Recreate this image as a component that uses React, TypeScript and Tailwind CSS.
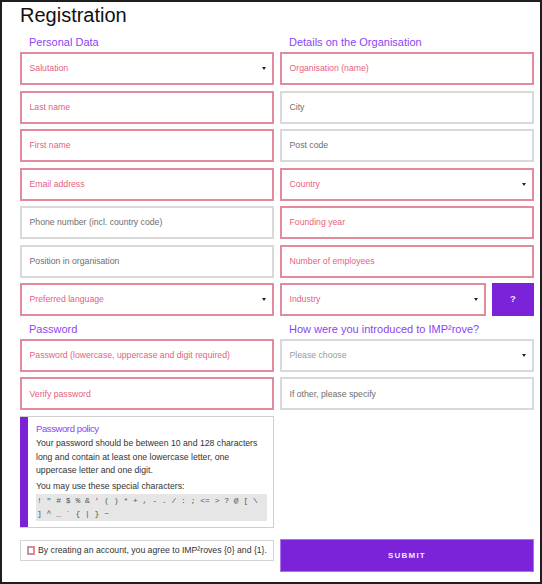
import React from "react";

const FONT = { fontFamily: '"Liberation Sans", Arial, sans-serif' };

function Arrow() {
  return (
    <span className="block w-0 h-0 border-l-[2px] border-r-[2px] border-t-[3px] border-l-transparent border-r-transparent border-t-[#222] mr-[1px]" />
  );
}

function Field({
  label,
  pink,
  select,
  light,
}: {
  label: string;
  pink?: boolean;
  select?: boolean;
  light?: boolean;
}) {
  return (
    <div
      className={`h-[33px] flex items-center justify-between pl-[7.5px] pr-[5px] border-2 bg-white text-[8.7px] leading-none ${
        pink
          ? "border-[#e48a9d] text-[#e65f7d]"
          : light
          ? "border-[#d9d9d9] text-[#9a9a9a]"
          : "border-[#d9d9d9] text-[#6e6e6e]"
      }`}
    >
      <span>{label}</span>
      {select ? <Arrow /> : null}
    </div>
  );
}

function Heading({ children }: { children: React.ReactNode }) {
  return (
    <div className="pl-[9px] text-[11px] leading-[13px] text-[#8a45f4] mb-[3.5px]">
      {children}
    </div>
  );
}

export default function App() {
  return (
    <div
      className="w-[542px] h-[584px] border-2 border-[#1e1e1e] bg-white pl-[18px] pr-[6px] pt-[1px] overflow-hidden"
      style={FONT}
    >
      <div className="text-[20px] leading-[24px] text-[#111]">Registration</div>

      <div className="grid grid-cols-[254px_254px] gap-x-[6px] mt-[8.5px] items-start">
        <div className="flex flex-col">
          <Heading>Personal Data</Heading>
          <div className="flex flex-col gap-[5.5px]">
            <Field label="Salutation" pink select />
            <Field label="Last name" pink />
            <Field label="First name" pink />
            <Field label="Email address" pink />
            <Field label="Phone number (incl. country code)" />
            <Field label="Position in organisation" />
            <Field label="Preferred language" pink select />
          </div>
        </div>
        <div className="flex flex-col">
          <Heading>Details on the Organisation</Heading>
          <div className="flex flex-col gap-[5.5px]">
            <Field label="Organisation (name)" pink />
            <Field label="City" />
            <Field label="Post code" />
            <Field label="Country" pink select />
            <Field label="Founding year" pink />
            <Field label="Number of employees" pink />
            <div className="flex gap-[6px]">
              <div className="flex-1">
                <Field label="Industry" pink select />
              </div>
              <button className="w-[42px] h-[33px] bg-[#7b23d9] text-[#efe4ff] text-[9.5px] font-semibold flex items-center justify-center">
                ?
              </button>
            </div>
          </div>
        </div>
      </div>

      <div className="grid grid-cols-[254px_254px] gap-x-[6px] mt-[6.9px] items-start">
        <div className="flex flex-col">
          <div className="pl-[9px] text-[11px] leading-[13px] text-[#8a45f4] mb-[3.1px]">Password</div>
          <div className="flex flex-col gap-[5.5px]">
            <Field label="Password (lowercase, uppercase and digit required)" pink />
            <Field label="Verify password" pink />
            <div className="flex border border-l-0 border-[#cfcfcf] h-[112px]">
              <div className="w-[8px] bg-[#7b22d6] shrink-0" />
              <div className="flex-1 pl-[8px] pr-[6px] pt-[5.5px] text-[#333]">
                <div className="text-[9.5px] leading-[13px] tracking-[-0.4px] text-[#8a45f4]">
                  Password policy
                </div>
                <div className="text-[8.7px] leading-[13.3px] mt-[1.8px] whitespace-nowrap">
                  Your password should be between 10 and 128 characters
                  <br />
                  long and contain at least one lowercase letter, one
                  <br />
                  uppercase letter and one digit.
                </div>
                <div className="text-[8.7px] leading-[13.3px] mt-[3px] whitespace-nowrap">
                  You may use these special characters:
                </div>
                <div
                  className="mt-[0.4px] bg-[#e6e6e6] pl-[1px] text-[8px] leading-[13.5px] text-[#555] whitespace-pre"
                  style={{ fontFamily: '"Liberation Mono", "DejaVu Sans Mono", monospace' }}
                >
                  {'! " # $ % & \' ( ) * + , - . / : ; <= > ? @ [ \\'}
                  <br />
                  {"] ^ _ ` { | } ~"}
                </div>
              </div>
            </div>
          </div>
        </div>
        <div className="flex flex-col">
          <div className="pl-[9px] text-[11px] leading-[13px] text-[#8a45f4] mb-[3.1px]">
            How were you introduced to IMP²rove?
          </div>
          <div className="flex flex-col gap-[5.5px]">
            <Field label="Please choose" light select />
            <Field label="If other, please specify" />
          </div>
        </div>
      </div>

      <div className="grid grid-cols-[254px_254px] gap-x-[6px] mt-[11.5px] items-start">
        <div className="h-[21px] mt-[0.5px] border border-[#d4d4d4] flex items-center pl-[6px] gap-[3px]">
          <span className="w-[8px] h-[9px] border border-[#e4899c] flex items-center justify-center shrink-0">
            <span className="w-[6px] h-[7px] border border-[#a0a0a0]" />
          </span>
          <span className="text-[8.7px] leading-none text-[#333] whitespace-nowrap">
            By creating an account, you agree to IMP²roves {"{0}"} and {"{1}"}.
          </span>
        </div>
        <button className="h-[33px] bg-[#7b23d9] border border-[#a774f0] text-[#f1e8ff] text-[8px] font-bold tracking-[1.2px] flex items-center justify-center">
          SUBMIT
        </button>
      </div>
    </div>
  );
}
